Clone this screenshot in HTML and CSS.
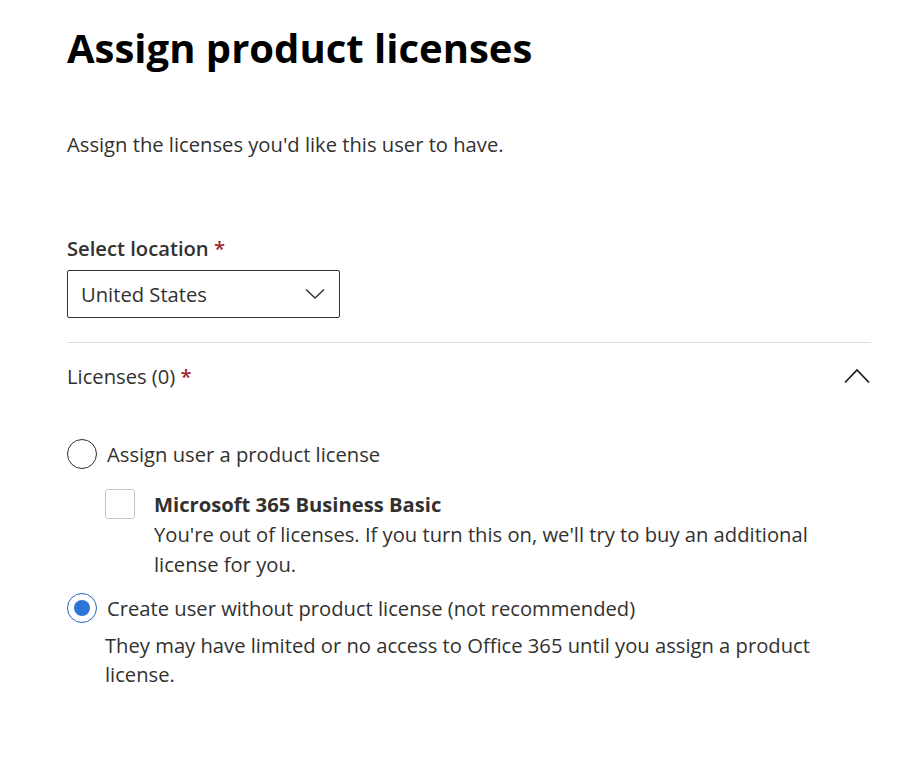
FILE: index.html
```html
<!DOCTYPE html>
<html>
<head>
<meta charset="utf-8">
<link rel="stylesheet" href="styles.css">
</head>
<body>
<main class="page">
  <h1 class="title">Assign product licenses</h1>
  <p class="intro">Assign the licenses you'd like this user to have.</p>

  <div class="field">
    <label class="field-label">Select location <span class="req">*</span></label>
    <div class="dropdown">
      <span class="dropdown-value">United States</span>
      <svg class="chev" width="20" height="12" viewBox="0 0 20 12"><path d="M1 1.5 L10 10 L19 1.5" fill="none" stroke="#323130" stroke-width="1.4"/></svg>
    </div>
  </div>

  <hr class="divider">

  <div class="section-head">
    <span class="section-title">Licenses (0) <span class="req">*</span></span>
    <svg class="chev-up" width="26" height="16" viewBox="0 0 26 16"><path d="M1 14.5 L13 2 L25 14.5" fill="none" stroke="#201f1e" stroke-width="1.8"/></svg>
  </div>

  <div class="options">
    <div class="radio-row">
      <span class="radio"></span>
      <span class="radio-label">Assign user a product license</span>
    </div>
    <div class="check-row">
      <span class="checkbox"></span>
      <div class="check-text">
        <div class="check-title">Microsoft 365 Business Basic</div>
        <div class="check-desc">You're out of licenses. If you turn this on, we'll try to buy an additional license for you.</div>
      </div>
    </div>
    <div class="radio-row checked-row">
      <span class="radio checked"></span>
      <span class="radio-label">Create user without product license (not recommended)</span>
    </div>
    <div class="radio-desc">They may have limited or no access to Office 365 until you assign a product license.</div>
  </div>
</main>
</body>
</html>
```
FILE: styles.css
```css
html, body {
  margin: 0;
  padding: 0;
  background: #ffffff;
}
body {
  font-family: "Open Sans", "Noto Sans", sans-serif;
  color: #323130;
}
.page {
  width: 804px;
  padding: 20px 0 0 67px;
}
.title {
  margin: 0;
  font-size: 40px;
  font-weight: 700;
  color: #000;
  line-height: 56px;
}
.intro {
  margin: 54px 0 0 0;
  font-size: 20.2px;
  line-height: 28px;
}
.field {
  margin-top: 76px;
}
.field-label {
  display: block;
  font-size: 20.2px;
  font-weight: 600;
  line-height: 28px;
}
.req {
  color: #a4262c;
  font-weight: 600;
}
.dropdown {
  margin-top: 8px;
  height: 46px;
  border: 1px solid #323130;
  border-radius: 2px;
  display: flex;
  align-items: center;
  justify-content: space-between;
  padding: 0 14px 0 13px;
  box-sizing: content-box;
  width: 244px;
}
.dropdown-value {
  font-size: 20.2px;
}
.divider {
  margin: 24px 0 0 0;
  border: 0;
  border-top: 1px solid #e1dfdd;
  width: 804px;
}
.section-head {
  display: flex;
  justify-content: space-between;
  align-items: center;
  margin-top: 18px;
  height: 30px;
}
.section-title {
  font-size: 20.2px;
  line-height: 28px;
}
.chev-up {
  margin-right: 1px;
}
.options {
  margin-top: 48px;
}
.radio-row {
  display: flex;
  align-items: center;
  gap: 10px;
}
.radio {
  width: 30px;
  height: 30px;
  border: 1.5px solid #323130;
  border-radius: 50%;
  box-sizing: border-box;
  flex: none;
  display: flex;
  align-items: center;
  justify-content: center;
}
.radio.checked {
  border-color: #2266c8;
}
.radio.checked::after {
  content: "";
  width: 16px;
  height: 16px;
  border-radius: 50%;
  background: #2f74d8;
}
.radio-label {
  font-size: 20.2px;
  line-height: 30px;
}
.check-row {
  display: flex;
  gap: 19px;
  margin: 20px 0 0 38px;
}
.checkbox {
  width: 30px;
  height: 30px;
  border: 1px solid #c8c6c4;
  border-radius: 3px;
  box-sizing: border-box;
  flex: none;
}
.check-title {
  font-size: 20.2px;
  font-weight: 700;
  line-height: 30px;
}
.check-desc {
  font-size: 20.2px;
  line-height: 30px;
  width: 680px;
}
.checked-row {
  margin-top: 14px;
}
.radio-desc {
  margin: 8px 0 0 38px;
  font-size: 20.2px;
  line-height: 29px;
  width: 740px;
}
```
